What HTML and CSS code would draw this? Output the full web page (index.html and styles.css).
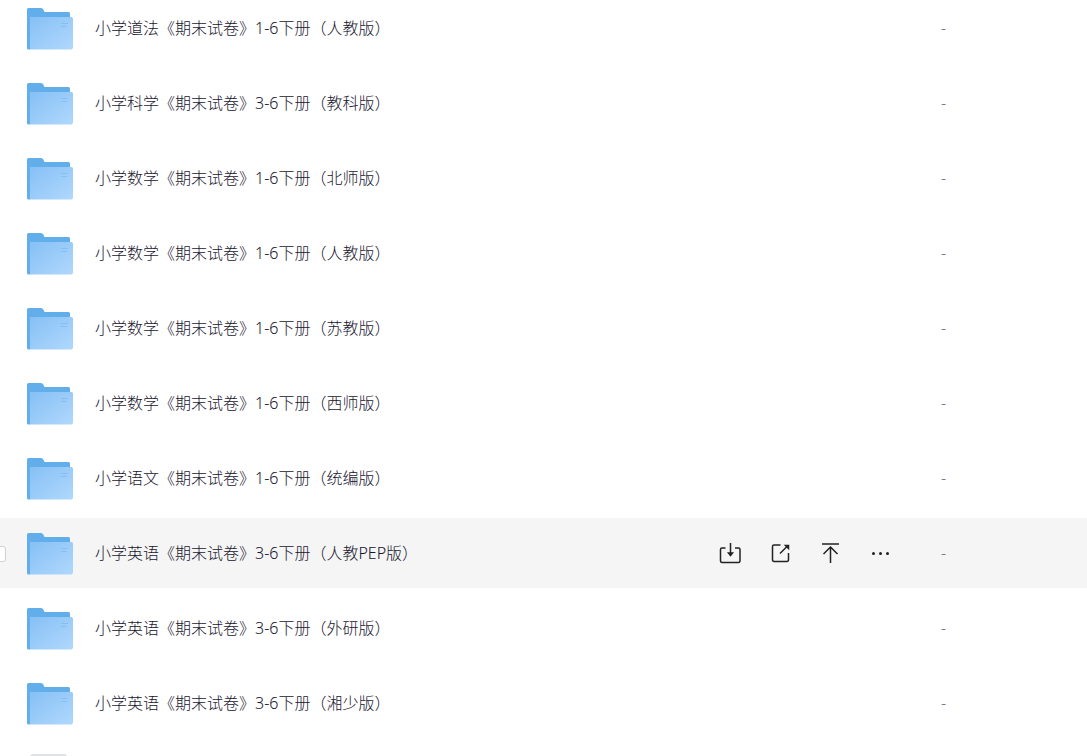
FILE: index.html
```
<!DOCTYPE html>
<html lang="zh-CN">
<head>
<meta charset="utf-8">
<title>小学期末试卷</title>
<link rel="stylesheet" href="styles.css">
</head>
<body>
<svg class="defs" aria-hidden="true">
  <defs>
    <linearGradient id="front" x1="0" y1="0" x2="1" y2="1">
      <stop offset="0" stop-color="#86c0f5"/>
      <stop offset="1" stop-color="#b0d8fd"/>
    </linearGradient>
    <symbol id="folder" viewBox="0 0 46 42">
      <path d="M0 1.5Q0 0 1.5 0H14Q15.500 0 16.300 1.500L17.500 4H41.500Q43 4 43 5.500V38H3V41.500H1.500Q0 41.500 0 40Z" fill="#62aeea"/>
      <path d="M3 9H44.500Q46 9 46 10.500V39.500Q46 41.500 44 41.500H3Z" fill="url(#front)"/>
      <path d="M34 15.500H41M34 18.500H40" stroke="#86bff1" stroke-width="1" fill="none"/>
    </symbol>
  </defs>
</svg>
<main class="viewport">
  <ul class="files">
    <li class="row"><svg class="icon"><use href="#folder"/></svg><span class="name">小学道法《期末试卷》1-6下册（人教版）</span><span class="size">-</span></li>
    <li class="row"><svg class="icon"><use href="#folder"/></svg><span class="name">小学科学《期末试卷》3-6下册（教科版）</span><span class="size">-</span></li>
    <li class="row"><svg class="icon"><use href="#folder"/></svg><span class="name">小学数学《期末试卷》1-6下册（北师版）</span><span class="size">-</span></li>
    <li class="row"><svg class="icon"><use href="#folder"/></svg><span class="name">小学数学《期末试卷》1-6下册（人教版）</span><span class="size">-</span></li>
    <li class="row"><svg class="icon"><use href="#folder"/></svg><span class="name">小学数学《期末试卷》1-6下册（苏教版）</span><span class="size">-</span></li>
    <li class="row"><svg class="icon"><use href="#folder"/></svg><span class="name">小学数学《期末试卷》1-6下册（西师版）</span><span class="size">-</span></li>
    <li class="row"><svg class="icon"><use href="#folder"/></svg><span class="name">小学语文《期末试卷》1-6下册（统编版）</span><span class="size">-</span></li>
    <li class="row active">
      <input class="check" type="checkbox" id="pick" aria-labelledby="pick-name">
      <svg class="icon"><use href="#folder"/></svg>
      <label class="name" id="pick-name" for="pick">小学英语《期末试卷》3-6下册（人教PEP版）</label>
      <div class="actions">
        <button class="action" type="button" aria-label="下载"><svg viewBox="0 0 24 24"><path d="M7.500 7H4Q2.500 7 2.500 8.500V19.500Q2.500 21.500 4 21.500H20.500Q22 21.500 22 19.500V8.500Q22 7 20.500 7H17M12.500 2V13"/><path class="solid" d="M10.500 12H14.500L12.500 14.500Z"/></svg></button>
        <button class="action" type="button" aria-label="分享"><svg viewBox="0 0 24 24"><path d="M12.500 4H6Q4.500 4 4.500 5.500V18.500Q4.500 20.500 6 20.500H19Q20.500 20.500 20.500 18.500V12M12 12.500L19.500 5"/><path class="solid" d="M17.500 4.500H20.500V7.500Z"/></svg></button>
        <button class="action" type="button" aria-label="置顶"><svg viewBox="0 0 24 24"><path d="M4 3H21M12.500 6V22M5.500 13L12.500 6L19.500 13"/></svg></button>
        <button class="action" type="button" aria-label="更多"><svg viewBox="0 0 24 24"><circle class="dot" cx="5.500" cy="12.500" r="1.500"/><circle class="dot" cx="12.500" cy="12.500" r="1.500"/><circle class="dot" cx="19.500" cy="12.500" r="1.500"/></svg></button>
      </div>
      <span class="size">-</span>
    </li>
    <li class="row"><svg class="icon"><use href="#folder"/></svg><span class="name">小学英语《期末试卷》3-6下册（外研版）</span><span class="size">-</span></li>
    <li class="row"><svg class="icon"><use href="#folder"/></svg><span class="name">小学英语《期末试卷》3-6下册（湘少版）</span><span class="size">-</span></li>
    <li class="row"><svg class="icon" viewBox="0 0 46 42"><rect x="3" y="-4" width="37" height="50" rx="3" fill="#e0e1e5"/></svg></li>
  </ul>
</main>
</body>
</html>
```
FILE: styles.css
```
* {
  box-sizing: border-box;
}

body {
  margin: 0;
  background: #fff;
  color: #18162e;
  font-family: "Noto Sans", "Noto Sans CJK SC", sans-serif;
  font-size: 16px;
  font-weight: 300;
  line-height: 24px;
}

.defs {
  position: absolute;
  width: 0;
  height: 0;
}

.viewport {
  height: 100vh;
  overflow: hidden;
}

/* The list is scrolled slightly past its first row and left edge. */
.files {
  display: flex;
  flex-direction: column;
  gap: 5px;
  margin: -7px 0 0 -10px;
  padding: 0;
  list-style: none;
}

.row {
  display: grid;
  grid-template-columns: 37px 46px 1fr 200px 146px;
  align-items: center;
  height: 70px;
  flex: none;
}

.active {
  background: #f5f5f5;
}

.check {
  grid-column: 1;
  grid-row: 1;
  appearance: none;
  width: 16px;
  height: 16px;
  margin: 2px 0 0;
  border: 1px solid #d0d0d4;
  border-radius: 3px;
  background: #fff;
}

.icon {
  grid-column: 2;
  grid-row: 1;
  width: 46px;
  height: 42px;
  margin-top: 2px;
  overflow: visible;
}

.name {
  grid-column: 3;
  grid-row: 1;
  padding-left: 22px;
  white-space: nowrap;
}

.actions {
  grid-column: 4;
  grid-row: 1;
  display: flex;
  gap: 26px;
  margin-left: -23px;
}

.action {
  width: 24px;
  height: 24px;
  padding: 0;
  border: 0;
  background: none;
}

.action svg {
  display: block;
  width: 24px;
  height: 24px;
  fill: none;
  stroke: #222;
  stroke-width: 1.5;
}

.action .solid {
  fill: #222;
}

.action .dot {
  fill: #222;
  stroke: none;
}

.size {
  grid-column: 5;
  grid-row: 1;
  color: #70707c;
}
```
